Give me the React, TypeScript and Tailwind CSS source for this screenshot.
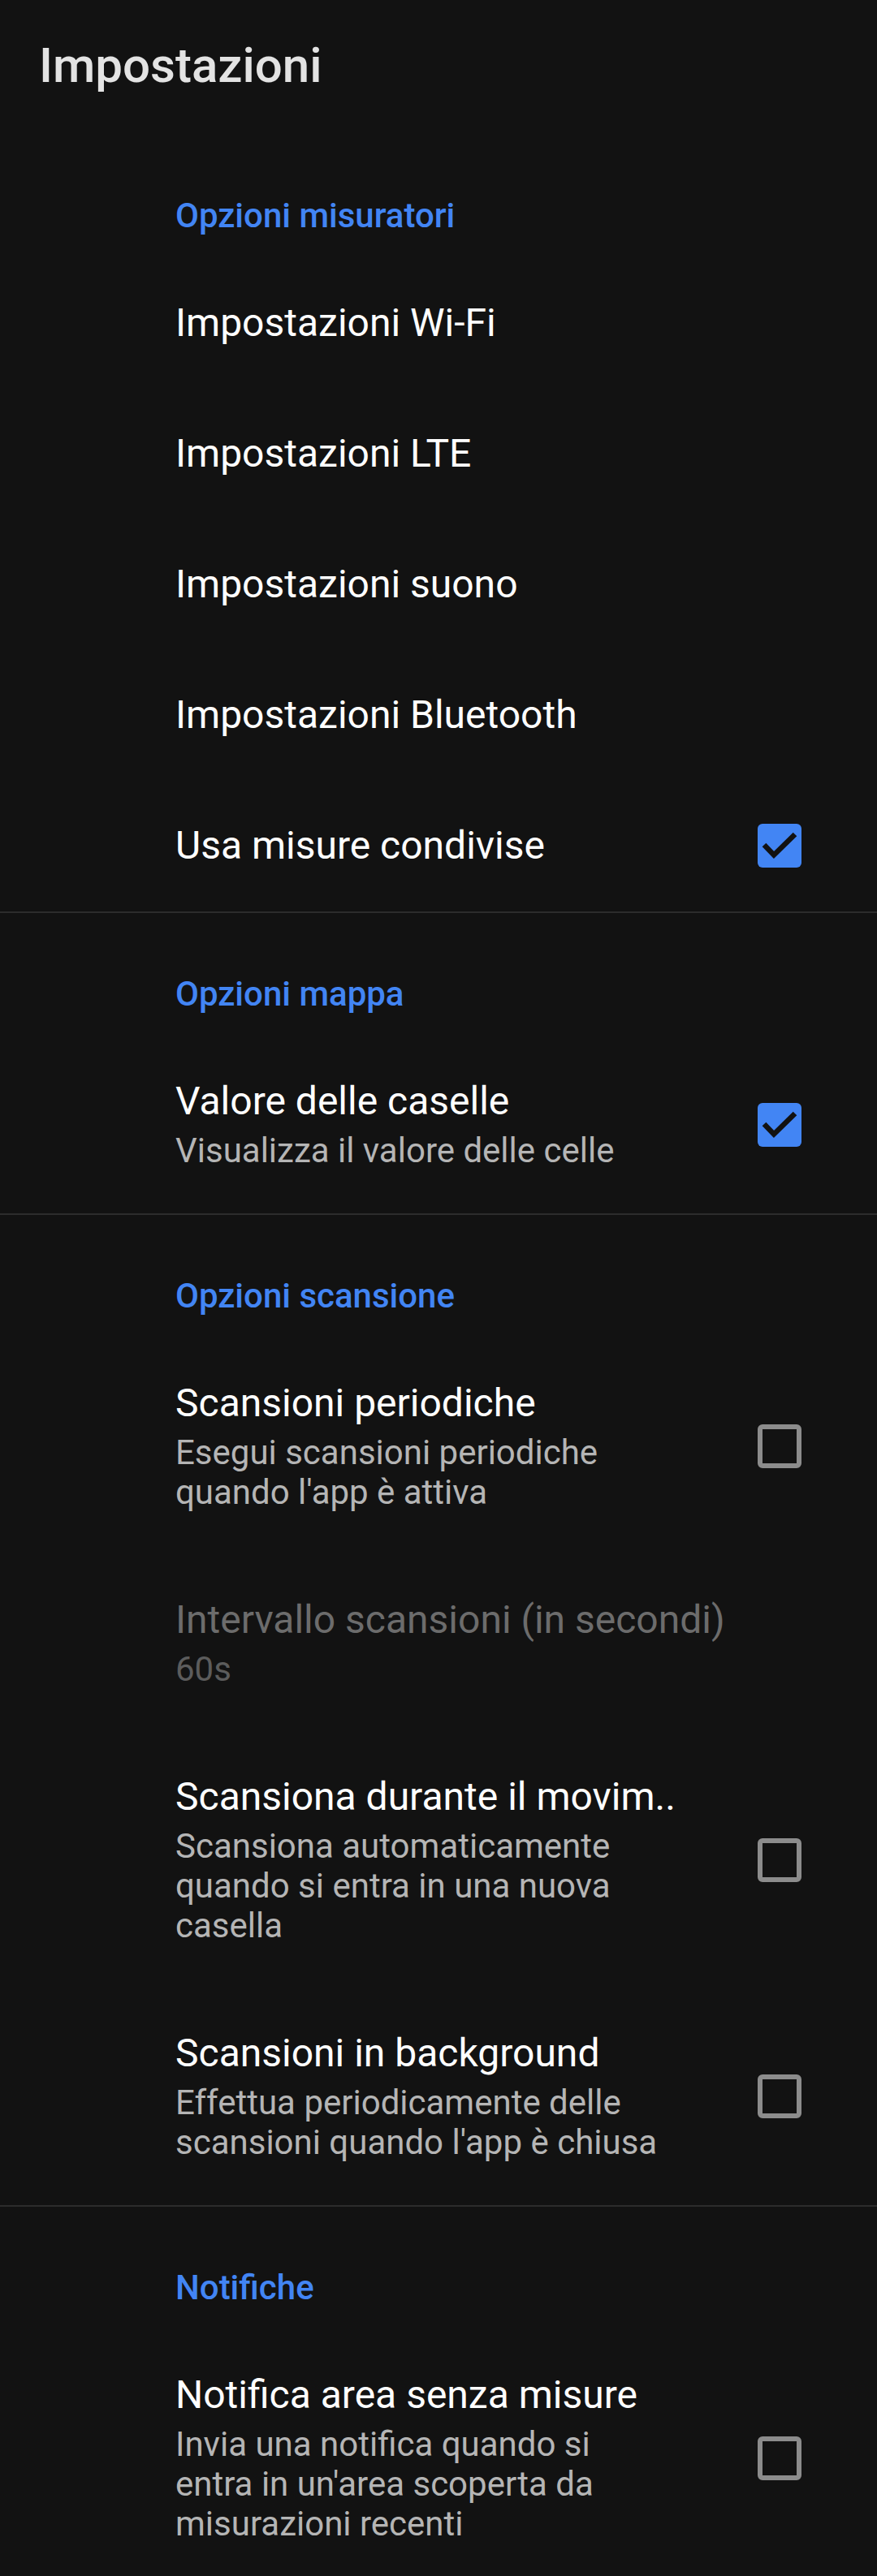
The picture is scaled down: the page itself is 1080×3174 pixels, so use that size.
import React from "react";

const BLUE = "text-[#4285f4]";

function Checkbox({ checked }: { checked: boolean }) {
  if (checked) {
    return (
      <div className="w-[54px] h-[54px] rounded-[6px] bg-[#4285f4] flex items-center justify-center shrink-0">
        <svg width="54" height="54" viewBox="0 0 54 54">
          <path d="M8 26 L20 38.5 L46 13" fill="none" stroke="#121212" strokeWidth="6.5" strokeLinecap="butt" strokeLinejoin="miter" />
        </svg>
      </div>
    );
  }
  return <div className="w-[54px] h-[54px] rounded-[6px] border-[6px] border-[#8c8c8c] shrink-0" />;
}

function Category({ children }: { children: React.ReactNode }) {
  return (
    <div className={`pl-[216px] pt-[75px] pb-[28px] text-[42px] leading-[49px] font-medium ${BLUE}`}>{children}</div>
  );
}

function Item({
  title,
  summary,
  checked,
  disabled,
}: {
  title: string;
  summary?: string[];
  checked?: boolean;
  disabled?: boolean;
}) {
  return (
    <div className="flex items-center pt-[52px] pb-[53px] pl-[216px] pr-[93px]">
      <div className="flex-1 flex flex-col min-w-0">
        <div
          className={`text-[48px] leading-[56px] whitespace-nowrap ${disabled ? "text-[#6c6c6c]" : "text-white"}`}
        >
          {title}
        </div>
        {summary && (
          <div
            className={`mt-[8px] text-[42px] leading-[49px] ${disabled ? "text-[#5c5c5c]" : "text-[#b5b5b5]"}`}
          >
            {summary.map((l, i) => (
              <div key={i} className="whitespace-nowrap">
                {l}
              </div>
            ))}
          </div>
        )}
      </div>
      {checked !== undefined && <Checkbox checked={checked} />}
    </div>
  );
}

function Divider() {
  return <div className="h-[2px] bg-[#2c2c2c]" />;
}

export default function App() {
  return (
    <div
      className="w-[1080px] min-h-[3174px] bg-[#121212] overflow-hidden"
      style={{ fontFamily: "Roboto, 'Noto Sans', sans-serif" }}
    >
      <div className="h-[166px] flex items-start pt-[46px] pl-[48px]">
        <div className="text-[60px] leading-[70px] font-medium text-[#e3e3e3]">Impostazioni</div>
      </div>

      <Category>Opzioni misuratori</Category>
      <Item title="Impostazioni Wi-Fi" />
      <Item title="Impostazioni LTE" />
      <Item title="Impostazioni suono" />
      <Item title="Impostazioni Bluetooth" />
      <Item title="Usa misure condivise" checked={true} />
      <Divider />

      <Category>Opzioni mappa</Category>
      <Item title="Valore delle caselle" summary={["Visualizza il valore delle celle"]} checked={true} />
      <Divider />

      <Category>Opzioni scansione</Category>
      <Item
        title="Scansioni periodiche"
        summary={["Esegui scansioni periodiche", "quando l'app è attiva"]}
        checked={false}
      />
      <Item title="Intervallo scansioni (in secondi)" summary={["60s"]} disabled />
      <Item
        title="Scansiona durante il movim.."
        summary={["Scansiona automaticamente", "quando si entra in una nuova", "casella"]}
        checked={false}
      />
      <Item
        title="Scansioni in background"
        summary={["Effettua periodicamente delle", "scansioni quando l'app è chiusa"]}
        checked={false}
      />
      <Divider />

      <Category>Notifiche</Category>
      <Item
        title="Notifica area senza misure"
        summary={["Invia una notifica quando si", "entra in un'area scoperta da", "misurazioni recenti"]}
        checked={false}
      />
    </div>
  );
}
